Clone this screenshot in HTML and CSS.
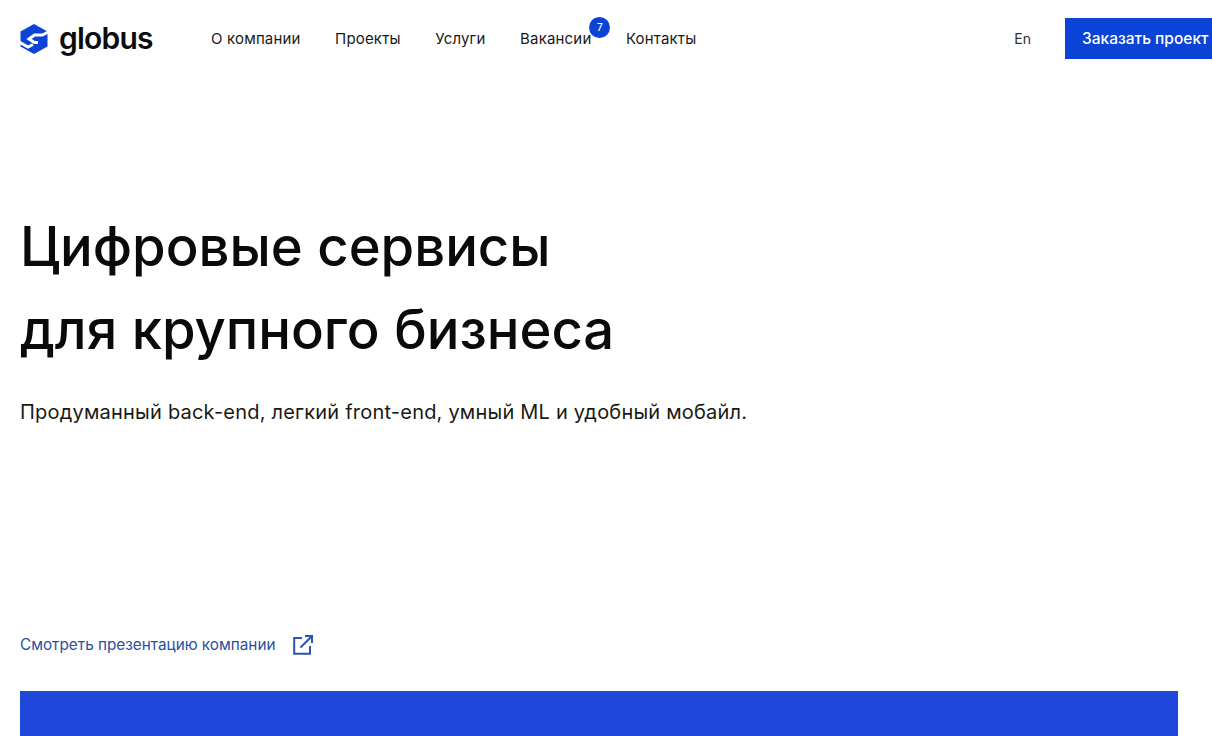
FILE: index.html
```html
<!DOCTYPE html>
<html lang="ru">
<head>
<meta charset="utf-8">
<title>Globus</title>
<link rel="stylesheet" href="styles.css">
</head>
<body>
<div class="page">
  <header class="header">
    <a class="logo" href="#">
      <svg class="logo-mark" viewBox="0 0 28 30" width="28" height="30" aria-hidden="true">
        <path class="mark-fill" d="M14 0 27.5 7.5V22.5L14 30 0.5 22.5V7.5Z"/>
        <path class="mark-cut" d="M29 7.6 22.5 11H14.5L9 15 14.5 18.5H18"/>
        <path class="mark-cut" d="M-1 18 8 23 13 20.5"/>
      </svg>
      <span class="logo-text">globus</span>
    </a>
    <nav class="nav">
      <a class="nav-link" href="#">О компании</a>
      <a class="nav-link" href="#">Проекты</a>
      <a class="nav-link" href="#">Услуги</a>
      <a class="nav-link nav-badged" href="#">Вакансии<span class="badge">7</span></a>
      <a class="nav-link" href="#">Контакты</a>
    </nav>
    <a class="lang" href="#">En</a>
    <a class="cta" href="#">Заказать проект</a>
  </header>
  <main class="main">
    <h1 class="title">Цифровые сервисы<br>для крупного бизнеса</h1>
    <p class="lead">Продуманный back-end, легкий front-end, умный ML и удобный мобайл.</p>
    <a class="presentation" href="#">
      <span>Смотреть презентацию компании</span>
      <svg class="ext-icon" viewBox="0 0 20 20" width="20" height="20" fill="none" aria-hidden="true">
        <path d="M9 3H1.2V18.8H17V11"/>
        <path d="M7.5 12.5 18.8 1.2"/>
        <path d="M12 1H19V8"/>
      </svg>
    </a>
    <div class="banner"></div>
  </main>
</div>
</body>
</html>
```
FILE: styles.css
```css
* { box-sizing: border-box; }
html, body { margin: 0; padding: 0; height: 100%; overflow: hidden; background: #fff; }
body { font-family: Inter, "Noto Sans", sans-serif; color: #111; }
a { text-decoration: none; color: inherit; }
.page { width: 1212px; height: 736px; overflow: hidden; }
.header { display: flex; align-items: center; height: 59px; padding: 18px 0 0 20px; width: 1212px; }
.logo { display: flex; align-items: center; gap: 11px; width: 191px; flex: none; }
.logo-mark { flex: none; }
.mark-fill { fill: #0b43d6; }
.mark-cut { fill: none; stroke: #fff; stroke-width: 3; }
.logo-text { font-size: 30px; font-weight: 600; letter-spacing: -0.8px; color: #0c0c0f; line-height: 41px; }
.nav { display: flex; align-items: center; gap: 34.5px; font-size: 15px; letter-spacing: 0.17px; color: #1a1a1a; flex: none; }
.nav-link { display: block; line-height: 41px; position: relative; }
.badge { position: absolute; top: -1px; right: -19px; width: 21px; height: 21px; border-radius: 50%; background: #0b43d6; color: #fff; font-size: 10px; font-weight: 500; letter-spacing: 0; line-height: 21px; text-align: center; }
.lang { margin-left: auto; font-size: 14px; color: #333; line-height: 41px; margin-right: 34px; }
.cta { flex: none; width: 147px; height: 41px; padding-left: 17px; background: #0b43d6; color: #fff; font-size: 15.5px; font-weight: 500; line-height: 41px; white-space: nowrap; overflow: hidden; }
.main { padding: 0 34px 0 20px; }
.title { margin: 146px 0 0; font-size: 54.4px; font-weight: 500; line-height: 83px; color: #0a0a0a; letter-spacing: 0; }
.lead { margin: 26px 0 0; font-size: 20px; letter-spacing: 0.21px; line-height: 30px; color: #1a1a14; }
.presentation { display: flex; align-items: center; gap: 17px; margin-top: 206px; font-size: 15.3px; line-height: 24px; color: #2a4fa0; }
.ext-icon { stroke: #2a56ad; stroke-width: 2; flex: none; }
.banner { margin-top: 34px; height: 60px; background: #1f47db; }
```
